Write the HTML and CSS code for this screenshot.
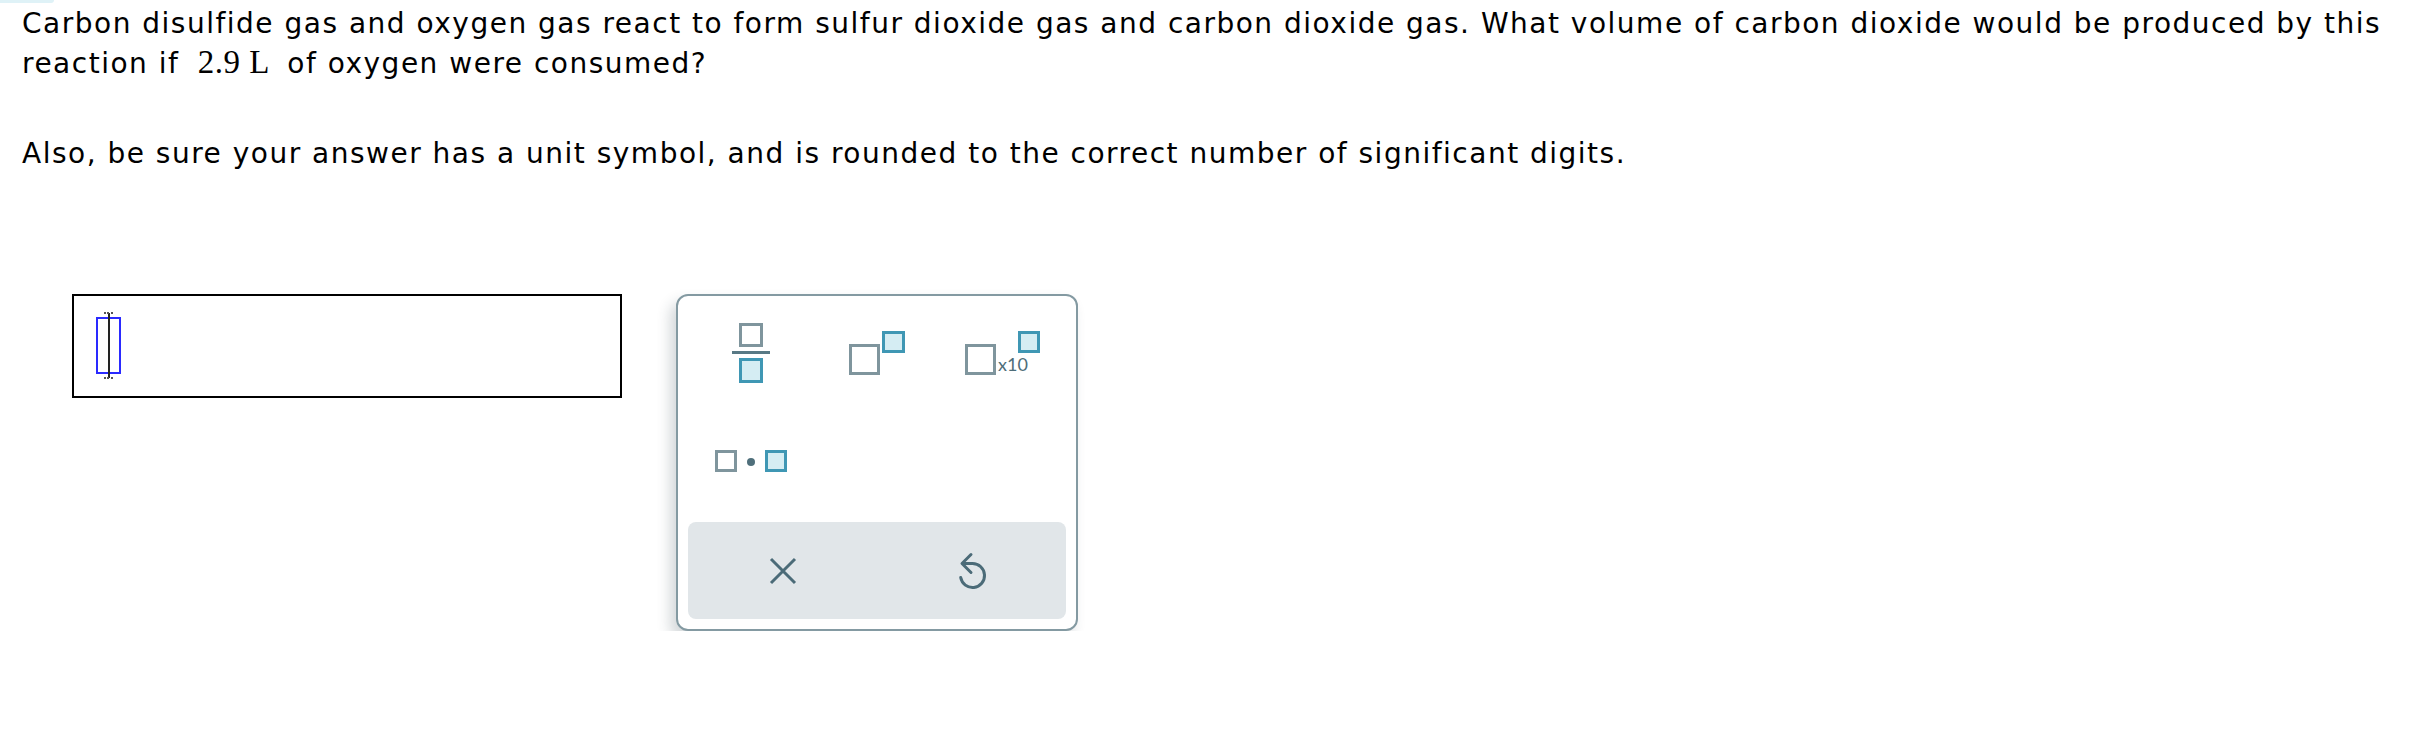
FILE: index.html
```html
<!DOCTYPE html>
<html lang="en">
<head>
<meta charset="utf-8">
<title>Question</title>
<link rel="stylesheet" href="styles.css">
</head>
<body>
<div class="top-tab"></div>
<main class="question">
  <p class="prompt">Carbon disulfide gas and oxygen gas react to form sulfur dioxide gas and carbon dioxide gas. What volume of carbon dioxide would be produced by this reaction if <span class="math">2.9&nbsp;L</span> of oxygen were consumed?</p>
  <p class="prompt">Also, be sure your answer has a unit symbol, and is rounded to the correct number of significant digits.</p>

  <div class="answer-row">
    <div class="answer-box">
      <span class="cursor"></span>
    </div>

    <div class="palette">
      <div class="tools">
        <button class="tool" type="button" aria-label="fraction">
          <svg width="40" height="63" viewBox="0 0 40 63">
            <rect x="9.5" y="2.5" width="21" height="21" fill="#fff" stroke="#7f959d" stroke-width="3"/>
            <rect x="1" y="29" width="38" height="3" fill="#587985"/>
            <rect x="9.5" y="37.5" width="21" height="22" fill="#d5edf3" stroke="#3f97b4" stroke-width="3"/>
          </svg>
        </button>
        <button class="tool" type="button" aria-label="superscript">
          <svg width="58" height="46" viewBox="0 0 58 46">
            <rect x="2.5" y="15.5" width="28" height="28" fill="#fff" stroke="#7f959d" stroke-width="3"/>
            <rect x="35.5" y="2.5" width="20" height="19" fill="#d5edf3" stroke="#3f97b4" stroke-width="3"/>
          </svg>
        </button>
        <button class="tool" type="button" aria-label="scientific notation">
          <svg width="78" height="46" viewBox="0 0 78 46">
            <rect x="2.5" y="15.5" width="28" height="28" fill="#fff" stroke="#7f959d" stroke-width="3"/>
            <text x="34" y="41" class="x10">x10</text>
            <rect x="55.5" y="2.5" width="19" height="19" fill="#d5edf3" stroke="#3f97b4" stroke-width="3"/>
          </svg>
        </button>
        <button class="tool" type="button" aria-label="multiply">
          <svg width="75" height="25" viewBox="0 0 75 25">
            <rect x="2.5" y="2.5" width="19" height="19" fill="#fff" stroke="#7f959d" stroke-width="3"/>
            <circle cx="37" cy="13" r="4" fill="#4f6f7b"/>
            <rect x="52.5" y="2.5" width="19" height="19" fill="#d5edf3" stroke="#3f97b4" stroke-width="3"/>
          </svg>
        </button>
      </div>
      <div class="actions">
        <button class="action" type="button" aria-label="clear">
          <svg width="28" height="28" viewBox="0 0 28 28">
            <path d="M2 2 L26 26 M26 2 L2 26" stroke="#4b6b78" stroke-width="3" fill="none"/>
          </svg>
        </button>
        <button class="action" type="button" aria-label="undo">
          <svg width="34" height="42" viewBox="0 0 34 42">
            <path d="M17.5 13.5 H7.5 M16 4.5 L7 13.5 L16 22.5 M17.5 13.5 A12 12 0 1 1 5.7 27.6" stroke="#4b6b78" stroke-width="3" fill="none" stroke-linecap="round" stroke-linejoin="round"/>
          </svg>
        </button>
      </div>
    </div>
  </div>
</main>
</body>
</html>
```

FILE: styles.css
```css
html, body {
  margin: 0;
  padding: 0;
  background: #fff;
}

body {
  font-family: "DejaVu Sans", Verdana, sans-serif;
  color: #000;
  position: relative;
}

.top-tab {
  position: absolute;
  top: 0;
  left: 0;
  width: 54px;
  height: 3px;
  background: #dff2f7;
  border-radius: 0 0 4px 0;
}

.question {
  padding: 4px 8px 0 22px;
}

.prompt {
  margin: 0 0 50px 0;
  font-size: 28px;
  line-height: 40px;
  letter-spacing: 1.5px;
}

.math {
  padding: 0 7px 0 8px;
  font-family: "Liberation Serif", "Times New Roman", serif;
  font-size: 33px;
  line-height: 1;
  letter-spacing: 0.5px;
}

.answer-row {
  display: flex;
  align-items: flex-start;
  gap: 54px;
  margin-left: 50px;
  margin-top: 120px;
}

.answer-box {
  box-sizing: border-box;
  width: 550px;
  height: 104px;
  border: 2px solid #000;
  padding: 21px 0 0 22px;
}

.cursor {
  display: block;
  position: relative;
  box-sizing: border-box;
  width: 25px;
  height: 57px;
  border: 2px solid #2a2aff;
}

.cursor::before {
  content: "";
  position: absolute;
  left: 9.5px;
  top: -6px;
  width: 2px;
  height: 65px;
  background: #222;
}

.cursor::after {
  content: "";
  position: absolute;
  left: 6px;
  top: -7px;
  width: 9px;
  height: 67px;
  border-top: 2px dotted #555;
  border-bottom: 2px dotted #555;
  box-sizing: border-box;
}

.palette {
  box-sizing: border-box;
  width: 402px;
  border: 2px solid #849aa2;
  border-radius: 12px;
  padding: 11px 10px 10px 10px;
  background: #fff;
  box-shadow: -6px 8px 14px rgba(40, 60, 70, 0.2);
}

.tools {
  display: grid;
  grid-template-columns: repeat(3, 1fr);
  grid-auto-rows: 92px;
  row-gap: 16px;
}

.tool,
.action {
  display: flex;
  align-items: center;
  justify-content: center;
  border: 0;
  padding: 0;
  margin: 0;
  background: transparent;
  cursor: pointer;
}

.tool svg,
.action svg {
  display: block;
}

.x10 {
  font-family: Lato, "Open Sans", sans-serif;
  font-size: 18px;
  fill: #4e6d79;
}

.actions {
  display: grid;
  grid-template-columns: 1fr 1fr;
  height: 97px;
  margin-top: 15px;
  background: #e1e6e9;
  border-radius: 8px;
}
```
